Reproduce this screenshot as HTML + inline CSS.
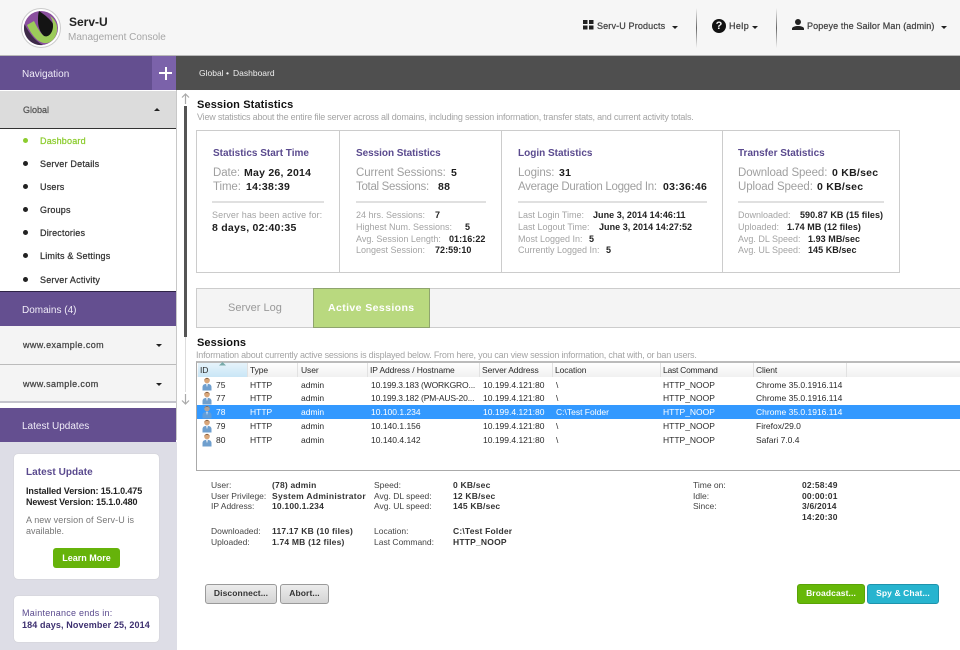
<!DOCTYPE html>
<html lang="en"><head><meta charset="utf-8"><title>Serv-U Management Console</title>
<style>
html,body{margin:0;padding:0}
body{width:960px;height:650px;position:relative;overflow:hidden;background:#fff;font-family:"Liberation Sans",Arial,sans-serif;color:#222}
.b{position:absolute;box-sizing:border-box}
.t{position:absolute;white-space:nowrap;line-height:14px;height:14px}
.pur{background:#644f90}
.hd{color:#f0ecf8;font-size:10px}
.m{font-size:9px;color:#333;letter-spacing:.2px;-webkit-text-stroke:.25px currentColor}
.dot{position:absolute;left:23px;width:5px;height:5px;border-radius:50%;background:#222}
.tt{font-size:10px;font-weight:bold;color:#5a4a8e;letter-spacing:0}
.l{font-size:11.5px;color:#a0a0a0;letter-spacing:-.1px}
.v{font-size:10.5px;font-weight:bold;color:#1d1d1d;letter-spacing:.25px}
.s{font-size:9px;color:#a4a4a4}
.d{letter-spacing:-.2px}
.w{font-size:9px;font-weight:bold;color:#222;letter-spacing:.05px}
.sep{position:absolute;height:2px;background:#e0e0e0;top:201px}
.g{font-size:8.5px;color:#444;letter-spacing:0}
.bv{font-size:8.5px;font-weight:bold;color:#333;letter-spacing:.2px}
.c{font-size:8.5px;color:#2a2a2a;letter-spacing:0}
.h{font-size:8.5px;color:#2a2a2a;letter-spacing:-.1px}
.sel{color:#fff}
.cd{position:absolute;top:363px;width:1px;height:14px;background:#e2e2e2}
.car{position:absolute;width:0;height:0;border-left:3px solid transparent;border-right:3px solid transparent;border-top:3px solid #222}
.up{border-top:0;border-bottom:3px solid #222}
.btn{position:absolute;box-sizing:border-box;border-radius:3px;text-align:center;font-size:8.5px;font-weight:bold;line-height:17px;height:20px;top:584px;letter-spacing:.1px}
.gr{background:linear-gradient(#ececec,#d4d4d4);border:1px solid #9a9a9a;color:#333}
.px{position:absolute;left:201px;width:13px;height:14px}
</style></head><body>
<svg width="0" height="0" style="position:absolute"><defs>
<g id="p"><circle cx="6" cy="3.500" r="2.800" fill="#d9a679"/><path d="M3.500 3.500C3.500 0.500 8.500 0.500 8.500 3.500L7.500 2H4.500z" fill="#6a4a30"/><path d="M1.500 13.500V10c0-2.300 2-3.300 4.500-3.300s4.500 1 4.500 3.300v3.500z" fill="#6f9fce"/><path d="M5 6.700h2l-1 3.500z" fill="#eef3f8"/></g>
</defs></svg>

<!-- header -->
<div class="b" style="left:0;top:0;width:960px;height:56px;background:#f6f6f6;border-bottom:1px solid #b9b9b9"></div>
<svg class="b" style="left:21px;top:8px" width="40" height="40" viewBox="0 0 40 40">
<circle cx="20" cy="20" r="19.500" fill="#fff" stroke="#ccc"/>
<circle cx="20" cy="20" r="17" fill="#8a4f9e"/>
<path d="M3.500 16A17 17 0 0 0 22 37C14 33 8 25 3.500 16z" fill="#3d2a48"/>
<path d="M18 3C24 7 32 13 34 20C34 25 30 28 26 30C20 27 17 20 17 13C17 9 17 6 18 3z" fill="#141414"/>
<path d="M6 17L13 13C16 19 19 25 23 28C28 30 32 24 32 18C32 14 31 11 29 8C34 11 37 17 36 23C35 31 29 36 23 35C16 34 10 26 6 17z" fill="#9ccb5a"/>
</svg>
<div class="t" style="left:69px;top:15px;font-size:12px;font-weight:bold;color:#222">Serv-U</div>
<div class="t" style="left:68px;top:31px;font-size:10px;color:#a6a6a6">Management Console</div>

<svg class="b" style="left:583px;top:20px" width="11" height="10"><rect x="0" y="0" width="4.500" height="4" fill="#222"/><rect x="6" y="0" width="4.500" height="4" fill="#222"/><rect x="0" y="5.500" width="4.500" height="4" fill="#222"/><rect x="6" y="5.500" width="4.500" height="4" fill="#222"/></svg>
<div class="t m" style="left:597px;top:19px;color:#444;letter-spacing:.15px">Serv-U Products</div>
<div class="car" style="left:672px;top:26px"></div>
<div class="b" style="left:696px;top:8px;width:1px;height:40px;background:linear-gradient(#f6f6f6,#666,#f6f6f6)"></div>
<div class="b" style="left:712px;top:19px;width:14px;height:14px;border-radius:50%;background:#111;color:#f6f6f6;font-size:11px;font-weight:bold;line-height:14px;text-align:center">?</div>
<div class="t m" style="left:729px;top:19px;color:#444;letter-spacing:.4px">Help</div>
<div class="car" style="left:752px;top:26px"></div>
<div class="b" style="left:776px;top:8px;width:1px;height:40px;background:linear-gradient(#f6f6f6,#666,#f6f6f6)"></div>
<svg class="b" style="left:792px;top:19px" width="12" height="11"><circle cx="6" cy="3" r="3" fill="#222"/><path d="M0 11V9.500C0 8 3 7 6 7s6 1 6 2.500V11z" fill="#222"/></svg>
<div class="t m" style="left:807px;top:19px;color:#444;letter-spacing:.12px">Popeye the Sailor Man (admin)</div>
<div class="car" style="left:941px;top:26px"></div>

<!-- top bars -->
<div class="b pur" style="left:0;top:56px;width:152px;height:34px"></div>
<div class="b" style="left:152px;top:56px;width:24px;height:34px;background:#7b62aa"></div>
<div class="b" style="left:159px;top:72px;width:13px;height:2px;background:#fff"></div>
<div class="b" style="left:164.500px;top:66.500px;width:2px;height:13px;background:#fff"></div>
<div class="b" style="left:176px;top:56px;width:784px;height:34px;background:#4f4f4f"></div>
<div class="t hd" style="left:22px;top:68px">Navigation</div>
<div class="t" style="left:199px;top:66px;font-size:8.5px;color:#eee">Global</div>
<div class="t" style="left:226px;top:66px;font-size:8.5px;color:#eee">•</div>
<div class="t" style="left:233px;top:66px;font-size:8.5px;color:#eee">Dashboard</div>

<!-- sidebar -->
<div class="b" style="left:176px;top:90px;width:1px;height:350px;background:#c8c8c8"></div>
<div class="b" style="left:0;top:91px;width:176px;height:38px;background:#dcdcdc;border-bottom:1px solid #333"></div>
<div class="t m" style="left:23px;top:103px;color:#555;letter-spacing:0">Global</div>
<div class="car up" style="left:154px;top:108px"></div>
<div class="dot" style="top:138px;background:#8ccc2e"></div><div class="t m" style="left:40px;top:134px;color:#8ccc2e">Dashboard</div>
<div class="dot" style="top:161px"></div><div class="t m" style="left:40px;top:157px">Server Details</div>
<div class="dot" style="top:184px"></div><div class="t m" style="left:40px;top:180px">Users</div>
<div class="dot" style="top:207px"></div><div class="t m" style="left:40px;top:203px">Groups</div>
<div class="dot" style="top:230px"></div><div class="t m" style="left:40px;top:226px">Directories</div>
<div class="dot" style="top:253px"></div><div class="t m" style="left:40px;top:249px">Limits &amp; Settings</div>
<div class="dot" style="top:277px"></div><div class="t m" style="left:40px;top:273px">Server Activity</div>

<div class="b pur" style="left:0;top:291px;width:176px;height:35px;border-top:1px solid #2e2346"></div>
<div class="t hd" style="left:22px;top:304px">Domains (4)</div>
<div class="b" style="left:0;top:326px;width:176px;height:39px;background:#f4f4f4;border-bottom:1px solid #bbb"></div>
<div class="t m" style="left:23px;top:338px;color:#444;letter-spacing:.4px">www.example.com</div>
<div class="car" style="left:156px;top:344px"></div>
<div class="b" style="left:0;top:365px;width:176px;height:38px;background:#f4f4f4;border-bottom:2px solid #c4c4cc"></div>
<div class="t m" style="left:23px;top:377px;color:#444;letter-spacing:.4px">www.sample.com</div>
<div class="car" style="left:156px;top:383px"></div>
<div class="b pur" style="left:0;top:408px;width:176px;height:34px"></div>
<div class="t hd" style="left:22px;top:420px">Latest Updates</div>
<div class="b" style="left:0;top:442px;width:177px;height:208px;background:#dddde6"></div>

<div class="b" style="left:14px;top:454px;width:145px;height:125px;background:#fff;border-radius:4px;box-shadow:0 0 1px #bbb"></div>
<div class="t" style="left:26px;top:466px;font-size:10px;font-weight:bold;color:#5a4a8e;letter-spacing:.05px">Latest Update</div>
<div class="t w" style="left:26px;top:484px;letter-spacing:-.12px">Installed Version: 15.1.0.475</div>
<div class="t w" style="left:26px;top:495px;letter-spacing:-.12px">Newest Version: 15.1.0.480</div>
<div class="t s" style="left:26px;top:513px;color:#777;letter-spacing:.1px">A new version of Serv-U is</div>
<div class="t s" style="left:26px;top:524px;color:#777">available.</div>
<div class="b" style="left:53px;top:548px;width:67px;height:20px;background:#66b30a;border-radius:3px;color:#fff;font-size:9px;font-weight:bold;text-align:center;line-height:20px">Learn More</div>
<div class="b" style="left:14px;top:596px;width:145px;height:46px;background:#fff;border-radius:4px;box-shadow:0 0 1px #bbb"></div>
<div class="t s" style="left:22px;top:606px;color:#5a4a8e;letter-spacing:.25px">Maintenance ends in:</div>
<div class="t w" style="left:22px;top:618px;color:#3d3070;letter-spacing:.12px">184 days, November 25, 2014</div>

<!-- scrollbar -->
<svg class="b" style="left:179px;top:92px" width="13" height="314" fill="none" stroke="#aaa" stroke-width="1.200"><path d="M6.500 12V2M3 5.500l3.500-3.500 3.500 3.500M6.500 302v10M3 308.500l3.500 3.500 3.500-3.500"/></svg>
<div class="b" style="left:184px;top:106px;width:3px;height:231px;background:#555"></div>
<div class="b" style="left:185px;top:337px;width:1px;height:55px;background:#ddd"></div>

<!-- session stats -->
<div class="t" style="left:197px;top:98px;font-size:11px;font-weight:bold;color:#111;letter-spacing:.12px">Session Statistics</div>
<div class="t s d" style="left:197px;top:110px">View statistics about the entire file server across all domains, including session information, transfer stats, and current activity totals.</div>
<div class="b" style="left:196px;top:130px;width:704px;height:143px;border:1px solid #ccc"></div>
<div class="b" style="left:339px;top:130px;width:1px;height:143px;background:#ccc"></div>
<div class="b" style="left:501px;top:130px;width:1px;height:143px;background:#ccc"></div>
<div class="b" style="left:722px;top:130px;width:1px;height:143px;background:#ccc"></div>

<div class="t tt" style="left:213px;top:147px">Statistics Start Time</div>
<div class="t l" style="left:213px;top:166px">Date:</div><div class="t v" style="left:244px;top:166px">May 26, 2014</div>
<div class="t l" style="left:213px;top:180px">Time:</div><div class="t v" style="left:246px;top:180px">14:38:39</div>
<div class="sep" style="left:212px;width:112px"></div>
<div class="t s" style="left:212px;top:208px;letter-spacing:.1px">Server has been active for:</div>
<div class="t v" style="left:212px;top:221px">8 days, 02:40:35</div>

<div class="t tt" style="left:356px;top:147px;letter-spacing:-.05px">Session Statistics</div>
<div class="t l" style="left:356px;top:166px">Current Sessions:</div><div class="t v" style="left:451px;top:166px">5</div>
<div class="t l" style="left:356px;top:180px;letter-spacing:-.3px">Total Sessions:</div><div class="t v" style="left:438px;top:180px">88</div>
<div class="sep" style="left:356px;width:130px"></div>
<div class="t s" style="left:356px;top:208px">24 hrs. Sessions:</div><div class="t w" style="left:435px;top:208px">7</div>
<div class="t s" style="left:356px;top:220px">Highest Num. Sessions:</div><div class="t w" style="left:465px;top:220px">5</div>
<div class="t s" style="left:356px;top:232px">Avg. Session Length:</div><div class="t w" style="left:449px;top:232px">01:16:22</div>
<div class="t s" style="left:356px;top:243px">Longest Session:</div><div class="t w" style="left:435px;top:243px">72:59:10</div>

<div class="t tt" style="left:518px;top:147px">Login Statistics</div>
<div class="t l" style="left:518px;top:166px">Logins:</div><div class="t v" style="left:559px;top:166px">31</div>
<div class="t l" style="left:518px;top:180px;letter-spacing:-.3px">Average Duration Logged In:</div><div class="t v" style="left:663px;top:180px">03:36:46</div>
<div class="sep" style="left:518px;width:189px"></div>
<div class="t s" style="left:518px;top:208px">Last Login Time:</div><div class="t w" style="left:593px;top:208px">June 3, 2014 14:46:11</div>
<div class="t s" style="left:518px;top:220px">Last Logout Time:</div><div class="t w" style="left:599px;top:220px">June 3, 2014 14:27:52</div>
<div class="t s" style="left:518px;top:232px">Most Logged In:</div><div class="t w" style="left:589px;top:232px">5</div>
<div class="t s" style="left:518px;top:243px">Currently Logged In:</div><div class="t w" style="left:606px;top:243px">5</div>

<div class="t tt" style="left:738px;top:147px">Transfer Statistics</div>
<div class="t l" style="left:738px;top:166px">Download Speed:</div><div class="t v" style="left:832px;top:166px">0 KB/sec</div>
<div class="t l" style="left:738px;top:180px">Upload Speed:</div><div class="t v" style="left:817px;top:180px">0 KB/sec</div>
<div class="sep" style="left:738px;width:146px"></div>
<div class="t s" style="left:738px;top:208px">Downloaded:</div><div class="t w" style="left:800px;top:208px">590.87 KB (15 files)</div>
<div class="t s" style="left:738px;top:220px">Uploaded:</div><div class="t w" style="left:787px;top:220px">1.74 MB (12 files)</div>
<div class="t s" style="left:738px;top:232px">Avg. DL Speed:</div><div class="t w" style="left:808px;top:232px">1.93 MB/sec</div>
<div class="t s" style="left:738px;top:243px">Avg. UL Speed:</div><div class="t w" style="left:808px;top:243px">145 KB/sec</div>

<!-- tabs -->
<div class="b" style="left:196px;top:288px;width:764px;height:40px;background:#f4f4f4;border:1px solid #ccc;border-right:0"></div>
<div class="b" style="left:313px;top:288px;width:117px;height:40px;background:#b9d97f;border:1px solid #8fa46e"></div>
<div class="t" style="left:228px;top:301px;font-size:11px;color:#999">Server Log</div>
<div class="t" style="left:328px;top:301px;font-size:10.500px;font-weight:bold;color:#fff;letter-spacing:.4px">Active Sessions</div>

<!-- sessions -->
<div class="t" style="left:197px;top:336px;font-size:11px;font-weight:bold;color:#111;letter-spacing:.1px">Sessions</div>
<div class="t s d" style="left:196px;top:348px">Information about currently active sessions is displayed below. From here, you can view session information, chat with, or ban users.</div>
<div class="b" style="left:196px;top:361px;width:764px;height:110px;border:1px solid #aaa;border-right:0;border-top:2px solid #bbb"></div>
<div class="b" style="left:197px;top:363px;width:763px;height:14px;background:linear-gradient(#fff,#f1f1f1)"></div>
<div class="b" style="left:198px;top:363px;width:49px;height:14px;background:linear-gradient(#e6f4fb,#c9e6f6)"></div>
<svg class="b" style="left:219px;top:362px" width="7" height="4"><path d="M0 3.500L3.500 0L7 3.500z" fill="#7aa"/></svg>
<div class="cd" style="left:247px"></div><div class="cd" style="left:297px"></div><div class="cd" style="left:367px"></div><div class="cd" style="left:479px"></div><div class="cd" style="left:552px"></div><div class="cd" style="left:660px"></div><div class="cd" style="left:753px"></div><div class="cd" style="left:846px"></div>
<div class="t h" style="left:200px;top:363px">ID</div>
<div class="t h" style="left:250px;top:363px">Type</div>
<div class="t h" style="left:301px;top:363px">User</div>
<div class="t h" style="left:370px;top:363px">IP Address / Hostname</div>
<div class="t h" style="left:482px;top:363px">Server Address</div>
<div class="t h" style="left:555px;top:363px">Location</div>
<div class="t h" style="left:663px;top:363px;letter-spacing:-.25px">Last Command</div>
<div class="t h" style="left:756px;top:363px">Client</div>

<div class="b" style="left:197px;top:405px;width:763px;height:14px;background:#3399ff"></div>

<svg class="px" style="top:377px"><use href="#p"/></svg>
<svg class="px" style="top:391px"><use href="#p"/></svg>
<svg class="px" style="top:405px;opacity:.75"><use href="#p"/></svg>
<svg class="px" style="top:419px"><use href="#p"/></svg>
<svg class="px" style="top:433px"><use href="#p"/></svg>

<div class="t c" style="left:216px;top:378px">75</div><div class="t c" style="left:250px;top:378px">HTTP</div><div class="t c" style="left:301px;top:378px">admin</div><div class="t c" style="left:371px;top:378px;letter-spacing:-.15px">10.199.3.183 (WORKGRO...</div><div class="t c" style="left:483px;top:378px">10.199.4.121:80</div><div class="t c" style="left:556px;top:378px">\</div><div class="t c" style="left:663px;top:378px">HTTP_NOOP</div><div class="t c" style="left:756px;top:378px">Chrome 35.0.1916.114</div>
<div class="t c" style="left:216px;top:391px">77</div><div class="t c" style="left:250px;top:391px">HTTP</div><div class="t c" style="left:301px;top:391px">admin</div><div class="t c" style="left:371px;top:391px;letter-spacing:-.15px">10.199.3.182 (PM-AUS-20...</div><div class="t c" style="left:483px;top:391px">10.199.4.121:80</div><div class="t c" style="left:556px;top:391px">\</div><div class="t c" style="left:663px;top:391px">HTTP_NOOP</div><div class="t c" style="left:756px;top:391px">Chrome 35.0.1916.114</div>
<div class="t c sel" style="left:216px;top:405px">78</div><div class="t c sel" style="left:250px;top:405px">HTTP</div><div class="t c sel" style="left:301px;top:405px">admin</div><div class="t c sel" style="left:371px;top:405px">10.100.1.234</div><div class="t c sel" style="left:483px;top:405px">10.199.4.121:80</div><div class="t c sel" style="left:556px;top:405px">C:\Test Folder</div><div class="t c sel" style="left:663px;top:405px">HTTP_NOOP</div><div class="t c sel" style="left:756px;top:405px">Chrome 35.0.1916.114</div>
<div class="t c" style="left:216px;top:419px">79</div><div class="t c" style="left:250px;top:419px">HTTP</div><div class="t c" style="left:301px;top:419px">admin</div><div class="t c" style="left:371px;top:419px">10.140.1.156</div><div class="t c" style="left:483px;top:419px">10.199.4.121:80</div><div class="t c" style="left:556px;top:419px">\</div><div class="t c" style="left:663px;top:419px">HTTP_NOOP</div><div class="t c" style="left:756px;top:419px">Firefox/29.0</div>
<div class="t c" style="left:216px;top:433px">80</div><div class="t c" style="left:250px;top:433px">HTTP</div><div class="t c" style="left:301px;top:433px">admin</div><div class="t c" style="left:371px;top:433px">10.140.4.142</div><div class="t c" style="left:483px;top:433px">10.199.4.121:80</div><div class="t c" style="left:556px;top:433px">\</div><div class="t c" style="left:663px;top:433px">HTTP_NOOP</div><div class="t c" style="left:756px;top:433px">Safari 7.0.4</div>

<!-- details -->
<div class="t g" style="left:211px;top:478px">User:</div><div class="t bv" style="left:272px;top:478px">(78) admin</div>
<div class="t g" style="left:211px;top:489px">User Privilege:</div><div class="t bv" style="left:272px;top:489px;letter-spacing:.3px">System Administrator</div>
<div class="t g" style="left:211px;top:499px">IP Address:</div><div class="t bv" style="left:272px;top:499px">10.100.1.234</div>
<div class="t g" style="left:211px;top:524px">Downloaded:</div><div class="t bv" style="left:272px;top:524px">117.17 KB (10 files)</div>
<div class="t g" style="left:211px;top:535px">Uploaded:</div><div class="t bv" style="left:272px;top:535px">1.74 MB (12 files)</div>
<div class="t g" style="left:374px;top:478px">Speed:</div><div class="t bv" style="left:453px;top:478px">0 KB/sec</div>
<div class="t g" style="left:374px;top:489px">Avg. DL speed:</div><div class="t bv" style="left:453px;top:489px">12 KB/sec</div>
<div class="t g" style="left:374px;top:499px">Avg. UL speed:</div><div class="t bv" style="left:453px;top:499px">145 KB/sec</div>
<div class="t g" style="left:374px;top:524px">Location:</div><div class="t bv" style="left:453px;top:524px">C:\Test Folder</div>
<div class="t g" style="left:374px;top:535px">Last Command:</div><div class="t bv" style="left:453px;top:535px">HTTP_NOOP</div>
<div class="t g" style="left:693px;top:478px">Time on:</div><div class="t bv" style="left:802px;top:478px">02:58:49</div>
<div class="t g" style="left:693px;top:489px">Idle:</div><div class="t bv" style="left:802px;top:489px">00:00:01</div>
<div class="t g" style="left:693px;top:499px">Since:</div><div class="t bv" style="left:802px;top:499px">3/6/2014</div>
<div class="t bv" style="left:802px;top:510px">14:20:30</div>

<!-- buttons -->
<div class="btn gr" style="left:205px;width:72px">Disconnect...</div>
<div class="btn gr" style="left:280px;width:49px">Abort...</div>
<div class="btn" style="left:797px;width:68px;background:#66b808;border:1px solid #5aa307;color:#fff">Broadcast...</div>
<div class="btn" style="left:867px;width:72px;background:#27b4cf;border:1px solid #1e93ac;color:#fff">Spy &amp; Chat...</div>
</body></html>
